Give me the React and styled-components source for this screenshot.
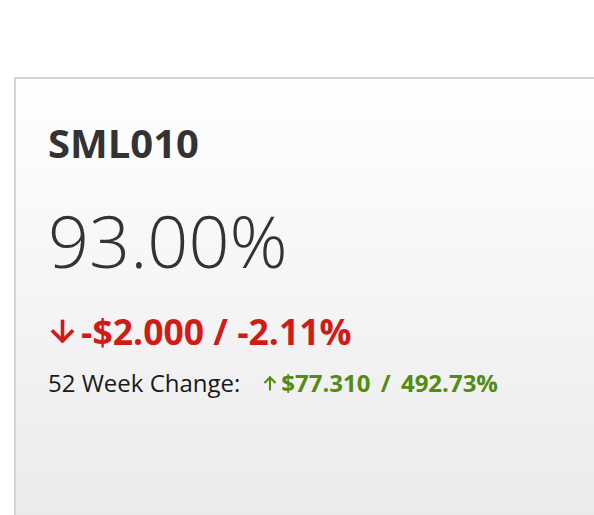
import React from "react";
import styled, { createGlobalStyle } from "styled-components";

const GlobalStyle = createGlobalStyle`
  html, body {
    margin: 0;
    padding: 0;
    background: #ffffff;
    overflow: hidden;
  }
  body {
    font-family: "Open Sans", "Liberation Sans", sans-serif;
    color: #333333;
  }
`;

const Page = styled.div`
  width: 594px;
  height: 515px;
  padding: 77px 0 0 14px;
  box-sizing: border-box;
  overflow: hidden;
`;

const Card = styled.div`
  width: 640px;
  height: 520px;
  box-sizing: border-box;
  border-top: 2px solid #d6d6d6;
  border-left: 2px solid #d6d6d6;
  background: linear-gradient(to bottom, #ffffff 0%, #e7e7e7 100%);
  padding: 44px 0 0 32px;
  display: flex;
  flex-direction: column;
`;

const Symbol = styled.div`
  font-size: 40px;
  font-weight: 700;
  line-height: 40px;
  color: #333333;
`;

const Price = styled.div`
  font-size: 72px;
  font-weight: 300;
  line-height: 72px;
  color: #333333;
  margin-top: 41px;
`;

const Change = styled.div`
  display: flex;
  align-items: center;
  gap: 6px;
  padding-left: 2px;
  font-size: 35.5px;
  font-weight: 700;
  line-height: 35px;
  color: ${(p) => p.color};
  margin-top: 38px;
`;

const WeekRow = styled.div`
  display: flex;
  align-items: center;
  margin-top: 22px;
  font-size: 24px;
  line-height: 24px;
`;

const Label = styled.span`
  font-weight: 400;
  color: #1a1a1a;
  margin-right: 22px;
`;

const WeekValue = styled.span`
  display: flex;
  align-items: center;
  gap: 3px;
  font-weight: 700;
  color: #548b12;
  word-spacing: 4px;
`;

const Arrow = ({ down, size, stroke, color }) => (
  <svg width={size} height={size} viewBox="0 0 20 20" fill="none">
    {down ? (
      <g stroke={color} strokeWidth={stroke} strokeLinecap="square">
        <path d="M10 2 V17" />
        <path d="M2.5 10 L10 17.5 L17.5 10" />
      </g>
    ) : (
      <g stroke={color} strokeWidth={stroke} strokeLinecap="square">
        <path d="M10 18 V3" />
        <path d="M4 9 L10 3 L16 9" />
      </g>
    )}
  </svg>
);

export default function App() {
  return (
    <Page>
      <GlobalStyle />
      <Card>
        <Symbol>SML010</Symbol>
        <Price>93.00%</Price>
        <Change color="#d11b16">
          <Arrow down size={25} stroke={2.9} color="#d11b16" />
          <span>-$2.000 / -2.11%</span>
        </Change>
        <WeekRow>
          <Label>52 Week Change:</Label>
          <WeekValue>
            <Arrow size={16} stroke={2.6} color="#548b12" />
            <span>$77.310 / 492.73%</span>
          </WeekValue>
        </WeekRow>
      </Card>
    </Page>
  );
}
